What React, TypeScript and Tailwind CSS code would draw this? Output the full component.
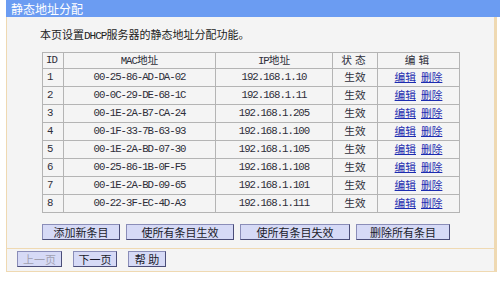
const rows = [
  { id: 1, mac: "00-25-86-AD-DA-02", ip: "192.168.1.10" },
  { id: 2, mac: "00-0C-29-DE-68-1C", ip: "192.168.1.11" },
  { id: 3, mac: "00-1E-2A-B7-CA-24", ip: "192.168.1.205" },
  { id: 4, mac: "00-1F-33-7B-63-93", ip: "192.168.1.100" },
  { id: 5, mac: "00-1E-2A-BD-07-30", ip: "192.168.1.105" },
  { id: 6, mac: "00-25-86-1B-0F-F5", ip: "192.168.1.108" },
  { id: 7, mac: "00-1E-2A-BD-09-65", ip: "192.168.1.101" },
  { id: 8, mac: "00-22-3F-EC-4D-A3", ip: "192.168.1.111" },
];

const cjk = "font-['Noto_Sans_CJK_SC',sans-serif]";
const mono = "font-['Liberation_Mono','Noto_Sans_CJK_SC',monospace] tracking-[-1px]";
const cell = "border border-[#b4b4b4] p-0";

function Btn({ label, w, disabled }: { label: string; w: string; disabled?: boolean }) {
  return (
    <button
      className={`${w} h-[16px] flex items-center justify-center bg-[#d6daf6] border border-[#8a8db8] border-r-[#4a4d78] border-b-[#4a4d78] text-[11px] leading-none ${
        disabled ? "text-[#a0a0b0]" : "text-[#1a1a2a]"
      }`}
    >
      {label}
    </button>
  );
}

export default function App() {
  return (
    <div className={`w-[500px] h-[282px] bg-white ${cjk} text-[10.7px] text-[#2e2e3a]`}>
      {/* Title bar */}
      <div className="ml-[6px] h-[17px] bg-[#6b9cf2] text-white text-[12px] pl-[5px] flex items-center">
        静态地址分配
      </div>

      {/* Panel */}
      <div className="ml-[6px] w-[491px] h-[255px] bg-[#f4f4f4] border-l border-r-[3px] border-b border-[#efd9b2] flex flex-col">
        <div className="pl-[33px] pt-[9px] h-[35px] text-[11px] text-[#222]">
          本页设置<span className={mono}>DHCP</span>服务器的静态地址分配功能。
        </div>

        <table className="ml-[35px] w-[417px] border-collapse border border-[#9a9a9a] table-fixed leading-none">
          <thead>
            <tr className="h-[16px]">
              <th className={`w-[21px] ${cell} font-normal text-left pl-[3px] ${mono}`}>ID</th>
              <th className={`w-[152px] ${cell} font-normal`}>
                <span className={mono}>MAC</span>地址
              </th>
              <th className={`w-[117px] ${cell} font-normal`}>
                <span className={mono}>IP</span>地址
              </th>
              <th className={`w-[45px] ${cell} font-normal tracking-[3px]`}>状态</th>
              <th className={`w-[82px] ${cell} font-normal tracking-[3px]`}>编辑</th>
            </tr>
          </thead>
          <tbody>
            {rows.map((r) => (
              <tr key={r.id} className="h-[18px]">
                <td className={`${cell} pl-[4px] ${mono}`}>{r.id}</td>
                <td className={`${cell} text-center ${mono}`}>{r.mac}</td>
                <td className={`${cell} text-center ${mono}`}>{r.ip}</td>
                <td className={`${cell} text-center`}>生效</td>
                <td className={`${cell} text-center`}>
                  <span className="text-[#1c2cb0] underline">编辑</span>
                  <span className="ml-[5px] text-[#1c2cb0] underline">删除</span>
                </td>
              </tr>
            ))}
          </tbody>
        </table>

        <div className="ml-[35px] mt-[11px] flex gap-[6px]">
          <Btn label="添加新条目" w="w-[78px]" />
          <Btn label="使所有条目生效" w="w-[108px]" />
          <Btn label="使所有条目失效" w="w-[110px]" />
          <Btn label="删除所有条目" w="w-[94px]" />
        </div>

        <div className="mt-[8px] h-px bg-[#efd9b2]" />

        <div className="ml-[10px] mt-[2px] flex gap-[11px]">
          <Btn label="上一页" w="w-[45px]" disabled />
          <Btn label="下一页" w="w-[44px]" />
          <Btn label="帮 助" w="w-[38px]" />
        </div>
      </div>
    </div>
  );
}
